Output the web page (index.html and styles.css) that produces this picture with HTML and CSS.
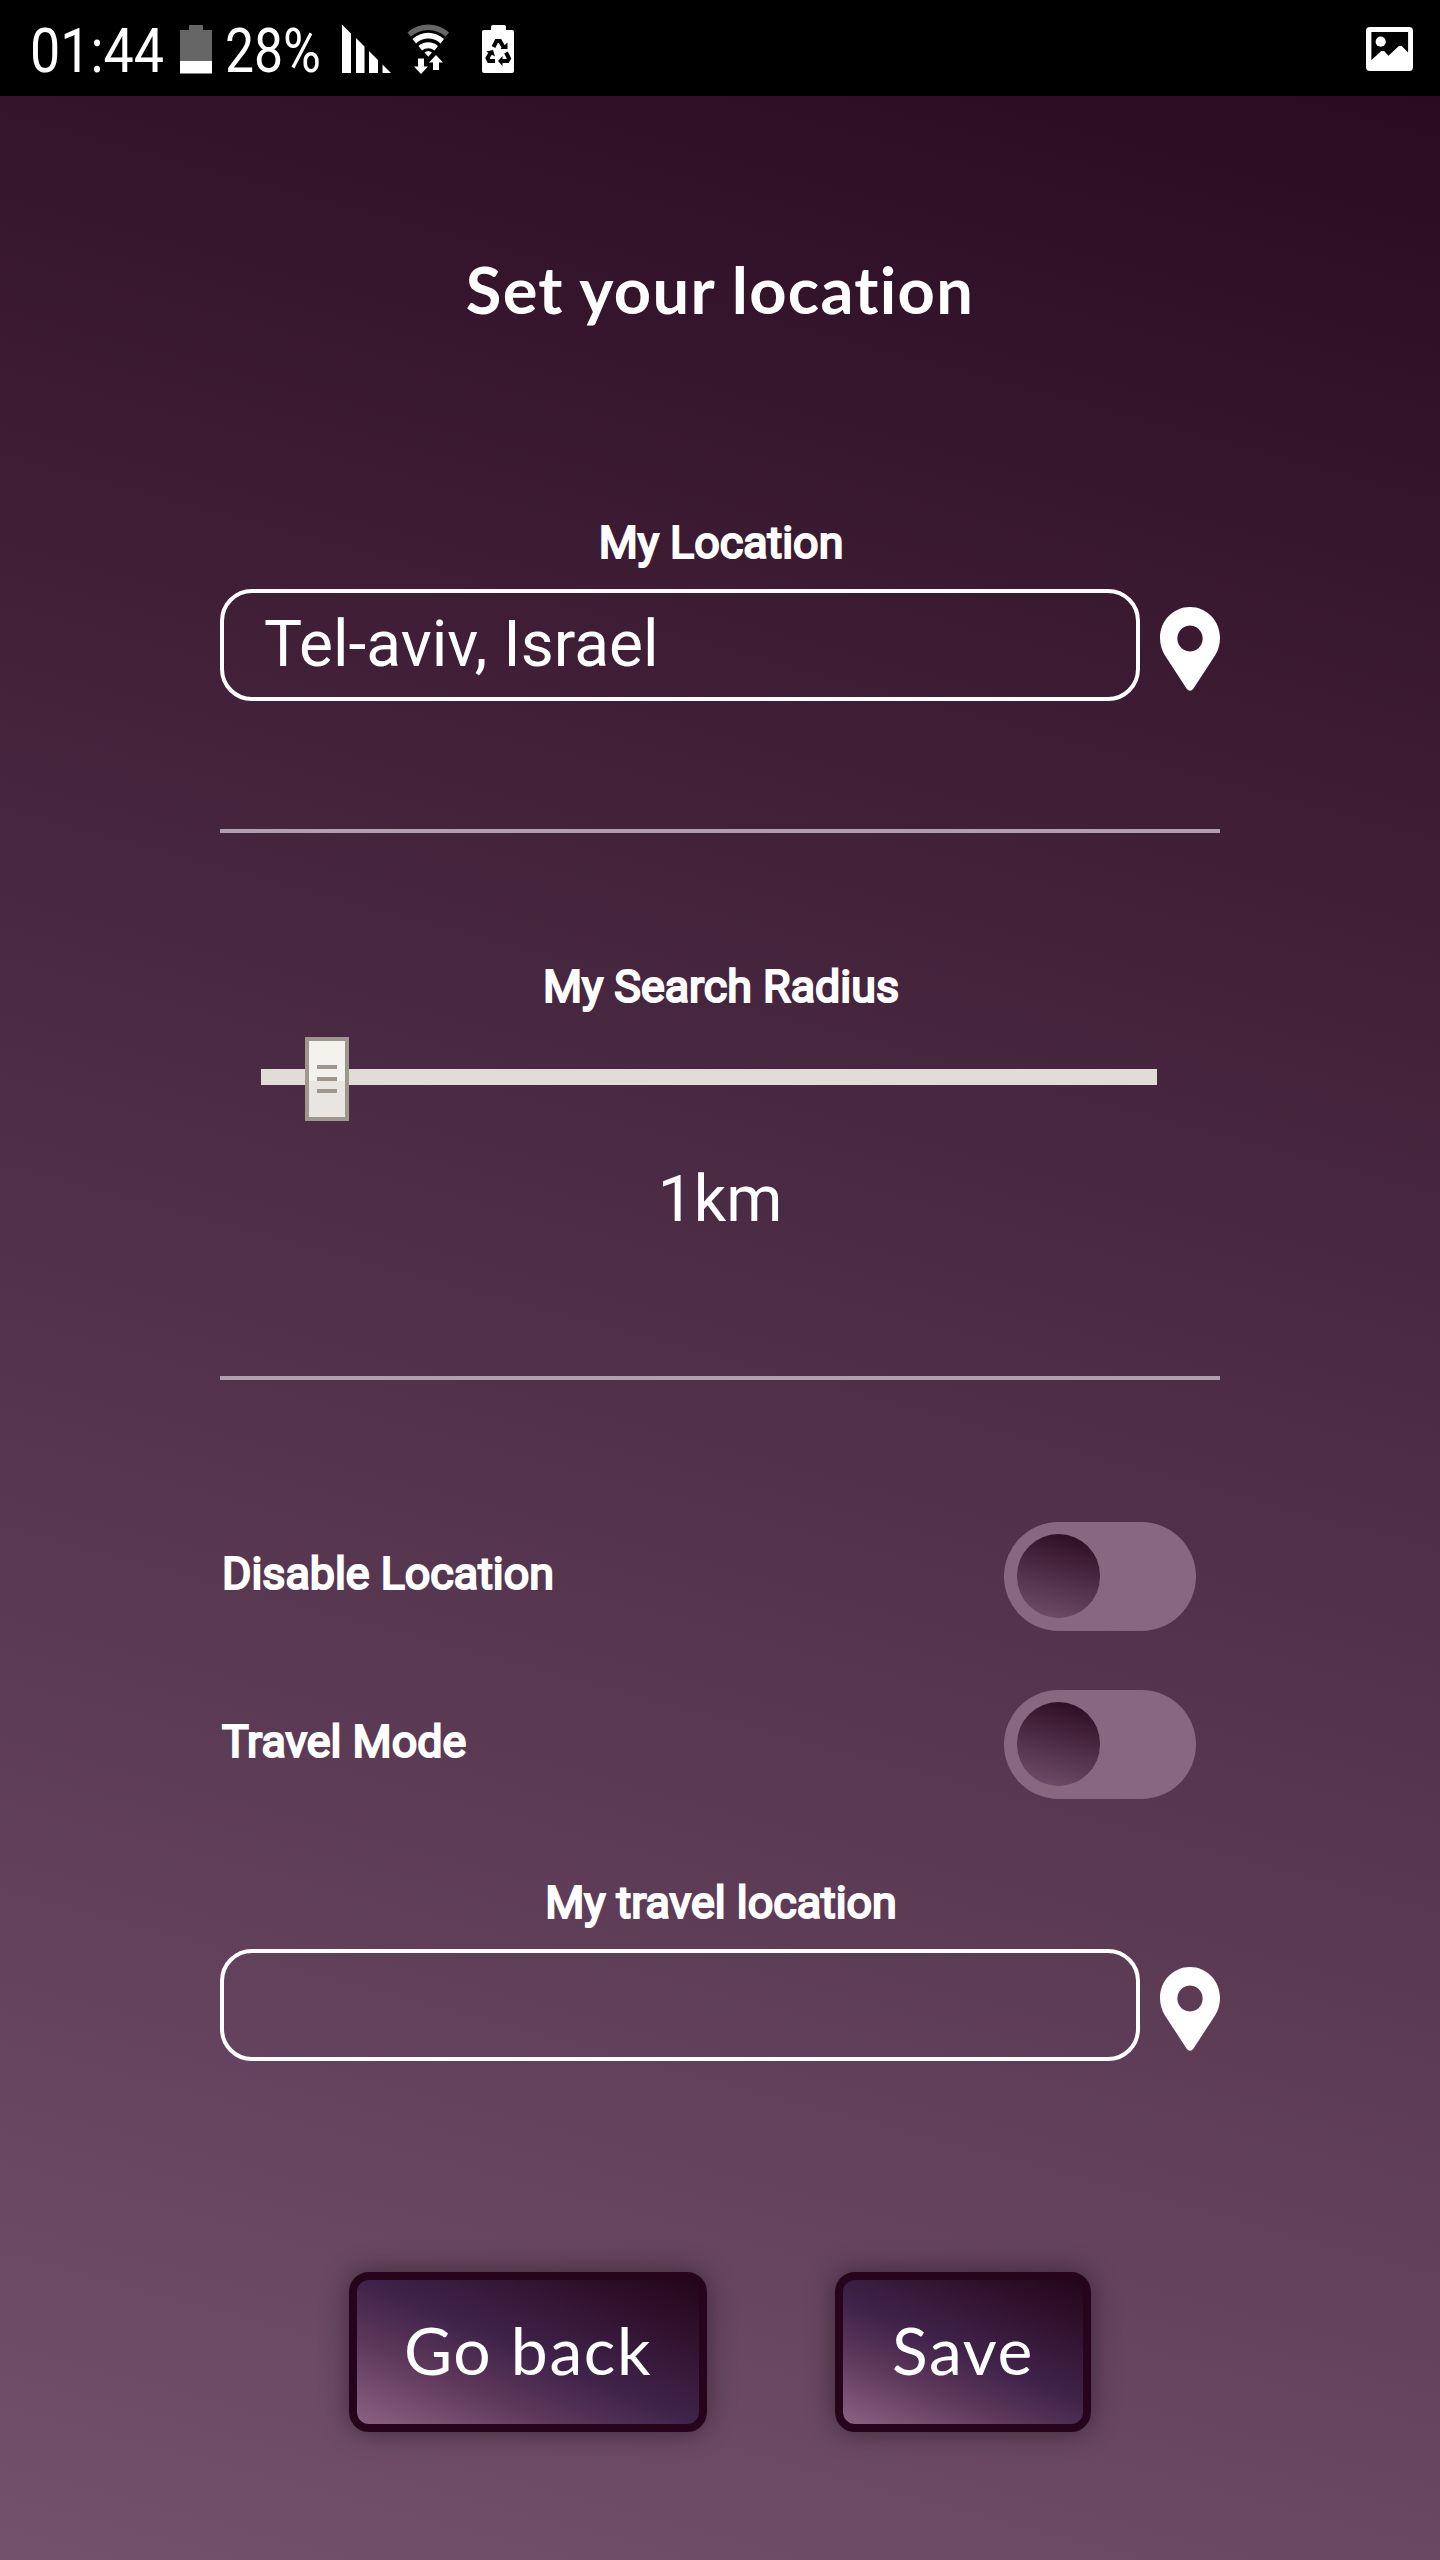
FILE: index.html
```html
<!DOCTYPE html>
<html lang="en">
<head>
<meta charset="utf-8">
<title>Set your location</title>
<link rel="stylesheet" href="styles.css">
</head>
<body>
<div class="screen">
  <header class="status-bar">
    <svg class="status-left" width="560" height="96" viewBox="0 0 560 96">
      <text x="30" y="72" font-size="60.500" textLength="134" lengthAdjust="spacingAndGlyphs">01:44</text>
      <path fill="#666" d="M189 25h14v5h9v31h-32V30h9z"/>
      <path d="M180 61h32v12.500h-32z"/>
      <text x="225" y="72" font-size="60.500" textLength="96" lengthAdjust="spacingAndGlyphs">28%</text>
      <path d="M342 24.500l9 9V73h-9zM356 38l8.500 8.500V73H356zM369 51l9 9V73h-9zM382.500 64.500l8.500 8.500h-8.500z"/>
      <path fill="#666" d="M407.500 32.500a31 31 0 0 1 41.500 0l-3.500 4a26 26 0 0 0-34.500 0z"/>
      <path d="M412.500 39a23 23 0 0 1 31.500 0l-3.500 4.500a17.500 17.500 0 0 0-24.500 0zM418.500 46a14.500 14.500 0 0 1 19.500 0l-3.500 4.500a9.500 9.500 0 0 0-12.500 0zM424.500 52.500a6 6 0 0 1 7.500 0l-3.700 4.200z"/>
      <path d="M418 58.500h6v8h4l-7 7.500-7-7.500h4zM436 55l7 7.500h-4V70h-6v-7.500h-4z"/>
      <path d="M491 27q0-2 2-2h11q2 0 2 2v3h6q2 0 2 2v39q0 2-2 2h-28q-2 0-2-2V32q0-2 2-2h7z"/>
      <g fill="none" stroke="#000" stroke-width="4">
        <path d="M493.500 47l3-6h3.500l4 7"/>
        <path d="M506 52.500l3 6-1.500 2.500h-6"/>
        <path d="M495 61h-6l-1.500-3 3.500-6"/>
      </g>
      <path fill="#000" d="M500.500 49h7v-6.500zM502.500 56v10l-4.500-5zM486 51.500l7-1.500 2 6.500z"/>
    </svg>
    <svg class="status-right" width="47" height="45" viewBox="0 0 48 46" preserveAspectRatio="none">
      <path fill-rule="evenodd" d="M4 0h40q4 0 4 4v37q0 4-4 4H4q-4 0-4-4V4Q0 0 4 0zM5.500 5v29L15.500 24.500h3L23 29.500 33.500 19.500h3L43 26V5z"/>
      <circle cx="15" cy="15" r="5.200"/>
    </svg>
  </header>

  <main class="content">
    <h1 class="title">Set your location</h1>

    <section class="field field-location">
      <h2 class="label">My Location</h2>
      <div class="field-row">
        <div class="input">Tel-aviv, Israel</div>
        <svg class="pin" width="60" height="84" viewBox="0 0 60 84"><path fill-rule="evenodd" d="M30 0C46.500 0 60 13.500 60 31c0 7-2 12.500-5 17.500L33.500 81.500Q30 86 26.500 81.500L5 48.500C2 43.500 0 38 0 31 0 13.500 13.500 0 30 0zM30 18.500a12.700 13 0 1 0 .01 0z"/></svg>
      </div>
    </section>

    <hr class="divider divider-first">

    <section class="radius">
      <h2 class="label">My Search Radius</h2>
      <div class="slider">
        <div class="track"></div>
        <div class="thumb"><i></i><i></i><i></i></div>
      </div>
      <div class="value">1km</div>
    </section>

    <hr class="divider divider-second">

    <section class="options">
      <div class="option"><span class="label">Disable Location</span><div class="toggle"><span class="knob"></span></div></div>
      <div class="option"><span class="label">Travel Mode</span><div class="toggle"><span class="knob"></span></div></div>
    </section>

    <section class="field field-travel">
      <h2 class="label">My travel location</h2>
      <div class="field-row">
        <div class="input"></div>
        <svg class="pin" width="60" height="84" viewBox="0 0 60 84"><path fill-rule="evenodd" d="M30 0C46.500 0 60 13.500 60 31c0 7-2 12.500-5 17.500L33.500 81.500Q30 86 26.500 81.500L5 48.500C2 43.500 0 38 0 31 0 13.500 13.500 0 30 0zM30 18.500a12.700 13 0 1 0 .01 0z"/></svg>
      </div>
    </section>

    <div class="actions">
      <button class="button button-back">Go back</button>
      <button class="button button-save">Save</button>
    </div>
  </main>
</div>
</body>
</html>
```
FILE: styles.css
```css
* { box-sizing: border-box; }

body {
  margin: 0;
  color: #fff;
  font-family: Roboto, sans-serif;
}

.screen {
  width: 1440px;
  height: 2560px;
  overflow: hidden;
  background: linear-gradient(195deg, #28081e, #73516d);
}

.status-bar {
  height: 96px;
  padding-right: 27px;
  display: flex;
  align-items: center;
  justify-content: space-between;
  background: #000;
  fill: #fff;
}

.status-right { margin-top: 2px; }

.content {
  width: 1000px;
  margin: 0 auto;
  display: flex;
  flex-direction: column;
}

.title {
  margin: 153px 0 0;
  height: 81px;
  font: 700 65px/80px Lato, sans-serif;
  letter-spacing: 1.3px;
  text-align: center;
  white-space: nowrap;
}

.label {
  margin: 0;
  height: 56px;
  padding-left: 2px;
  font-size: 44.8px;
  font-weight: 400;
  line-height: 57px;
  text-align: center;
  white-space: nowrap;
  -webkit-text-stroke: 2.2px #fff;
}

.field-location { margin-top: 184px; }

.field-row {
  margin-top: 19px;
  display: flex;
  gap: 20px;
  align-items: center;
}

.input {
  width: 920px;
  height: 112px;
  padding: 0 40px;
  border: 4px solid #fff;
  border-radius: 32px;
  font-size: 64px;
  line-height: 104px;
}

.pin { fill: #fff; margin-top: 8px; }

.divider {
  width: 100%;
  height: 4px;
  border: 0;
  background: #b0a0af;
}

.divider-first { margin: 128px 0 0; }
.divider-second { margin: 138px 0 0; }

.radius { margin-top: 125px; }

.slider {
  position: relative;
  height: 84px;
  margin: 23px 63px 0 41px;
  display: flex;
  align-items: center;
}

.track {
  width: 100%;
  height: 16px;
  margin-bottom: 4px;
  background: #e1dcd6;
}

.thumb {
  position: absolute;
  left: 44px;
  top: 0;
  width: 44px;
  height: 84px;
  padding-top: 24px;
  border: 4px solid #9e978e;
  background: linear-gradient(#f4f2ef 40px, #e9e5e1 40px);
  display: flex;
  flex-direction: column;
  align-items: center;
  gap: 8px;
}

.thumb i {
  width: 20px;
  height: 4px;
  background: #9e978e;
}

.value {
  height: 80px;
  margin-top: 37px;
  font-size: 64px;
  line-height: 83px;
  text-align: center;
}

.options {
  margin-top: 141.5px;
  display: flex;
  flex-direction: column;
  gap: 59px;
}

.option {
  height: 109px;
  padding-right: 24px;
  display: flex;
  align-items: center;
  justify-content: space-between;
}

.option .label { margin-top: -7px; }

.toggle {
  width: 192px;
  height: 109px;
  padding: 12.500px;
  border-radius: 55px;
  background: #886780;
}

.knob {
  display: block;
  width: 83.5px;
  height: 83.5px;
  border-radius: 50%;
  background: linear-gradient(195deg, #28081e, #73516d);
}

.field-travel { margin-top: 75.5px; }

.actions {
  margin-top: 211px;
  display: flex;
  justify-content: center;
  gap: 128px;
}

.button {
  height: 160px;
  padding: 0 0 4px;
  border: 8px solid #26051c;
  border-radius: 20px;
  color: #fff;
  font: 400 66px/80px Lato, sans-serif;
  letter-spacing: 1.6px;
  background: linear-gradient(23deg, #8b6284, #5c375a 30%, #40234a 50%, #240519);
  box-shadow: 0 0 28px rgba(0, 0, 0, 0.42);
  white-space: nowrap;
}

.button-back { width: 358px; }
.button-save { width: 256px; }
```
